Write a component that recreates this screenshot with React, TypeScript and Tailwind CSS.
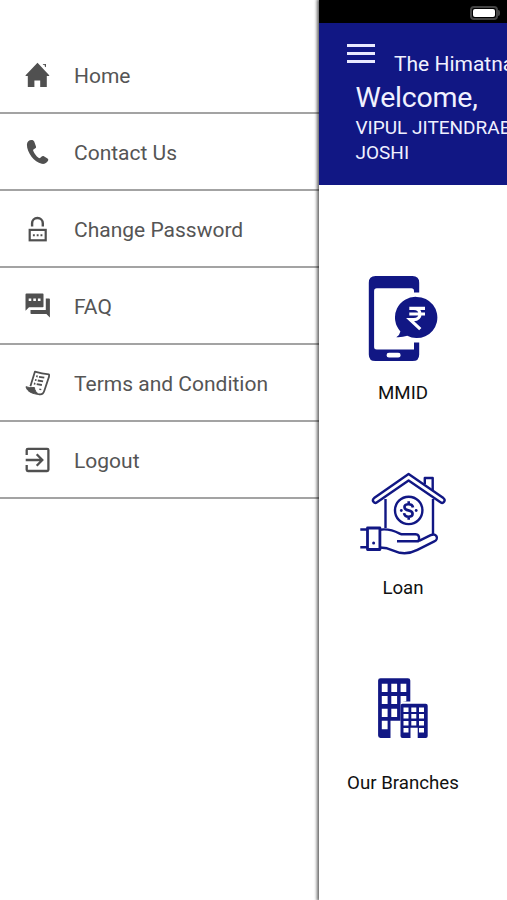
import type { ReactNode } from 'react';

const NAVY = '#111784';

const HomeIcon = () => (
  <svg width="26" height="27" viewBox="24 62 26 27" fill="#505050">
    <path d="M37.500 62.800 25.600 75.200v.8h2.200v10.900h6.600v-6.400h5.800v6.400h6.600V76h2.400v-.8z" />
    <path d="M42.900 64.200 46 64v3.300l-1.200-.9c.3-.8 0-1.300-1.900-1.300z" />
  </svg>
);

const PhoneIcon = () => (
  <svg width="26" height="27" viewBox="24 139 26 27" fill="#505050">
    <path d="M31.500 140c-2.500 0-4.600 1.900-4.600 4.700 0 8 7.500 17.400 14.800 19.100 2.600.5 5.100-.8 6.300-3 .5-1 .3-1.800-.5-2.300l-3.600-2.300c-.8-.5-1.600-.4-2.200.2l-1.300 1.300c-.6.600-1.200.6-1.900.1-2.200-1.600-4-4.200-5.200-6.900-.3-.8-.2-1.300.5-1.700l1.500-.9c.8-.5.9-1.200.6-2.100l-1.700-4.600c-.4-1.100-1.300-1.600-2.700-1.600z" />
  </svg>
);

const LockIcon = () => (
  <svg width="26" height="27" viewBox="24 216 26 27" fill="none" stroke="#505050">
    <path d="M32.100 226.500v-3.200c0-3 2.200-5.300 5.300-5.300s5.400 2.300 5.400 5.300v3.200" strokeWidth="2.400" />
    <rect x="29.700" y="229.900" width="16" height="10.400" strokeWidth="2.200" />
    <path d="M32.900 235.200h1.900M36.700 235.200h1.900M40.500 235.200h1.900" strokeWidth="2" />
  </svg>
);

const FaqIcon = () => (
  <svg width="26" height="27" viewBox="24 293 26 27">
    <path d="M26.500 293.400h16.200q.8 0 .8.800v12.300q0 .8-.8.800H29l-3.500 3.500v-16.400q0-1 1-1z" fill="#505050" />
    <path d="M45.800 298.500h3.300q.8 0 .8.800v18.200l-3.500-3.500H31.300q-.8 0-.8-.8v-3.100h15.300z" fill="#505050" />
    <path d="M28.700 299.800h2.600M33.300 299.800h2.600M37.900 299.800h2.600" stroke="#fff" strokeWidth="2.600" />
  </svg>
);

const TermsIcon = () => (
  <svg width="26" height="27" viewBox="24 370 26 27" fill="none" stroke="#505050" strokeLinejoin="round">
    <path d="M30.400 386.300 34.900 371.700Q42 374 48.900 374.300q.6 1.700-.5 4.200L44.400 390.500c-1 3.200-3.100 4.400-5.700 3.600" strokeWidth="1.800" />
    <path d="M26 386.700q3.300 1.500 8.400.8c.3 2.900 1.900 5.500 4.800 7.000-6.100-.6-12.200-2.500-13.200-7.800z" fill="#505050" strokeWidth="1" />
    <path d="m36.200 376.200 1.500.3m1.300.3 5.300.9M35 379.900l1.500.3m1.300.3 5.300.9M33.900 383.500l1.500.3m1.300.3 5.200.9" strokeWidth="1.800" />
    <path d="m39.300 389.200 2 .5" strokeWidth="1.200" />
  </svg>
);

const LogoutIcon = () => (
  <svg width="26" height="27" viewBox="24 447 26 27" fill="none" stroke="#505050" strokeWidth="2.300">
    <path d="M26.700 455v-5q0-1.200 1.200-1.200h19.200q1.300 0 1.300 1.200v19.700q0 1.300-1.300 1.300H27.900q-1.200 0-1.200-1.300V465" />
    <path d="M25.700 460H42M36.700 454.300l5.600 5.700-5.600 5.700" />
  </svg>
);

const MobileRupeeIcon = () => (
  <svg width="70" height="88" viewBox="368 275 70 88">
    <path
      fillRule="evenodd"
      fill={NAVY}
      d="M375.500 276h37q6.700 0 6.700 6.700v9.800H414v-1.600q0-2.700-2.700-2.700h-34.500q-2.700 0-2.700 2.700v56q0 2.500 2.700 2.500H414v-7h5.200v12q0 6.700-6.700 6.700h-37q-6.700 0-6.700-6.700v-71.700q0-6.700 6.700-6.700zM389 352.700h9.200a2.400 2.400 0 0 1 0 4.900H389a2.400 2.400 0 0 1 0-4.900z"
    />
    <path fill={NAVY} d="M416.800 296.900a20.600 20.600 0 1 1-9.500 38.900q-5.400 1.800-11.000 1.400 3.300-1.800 4.100-5.800a20.600 20.600 0 0 1 16.400-34.500z" />
    <path d="M409.300 308.300H425M409.300 314H425M409.300 308.300h4.500c8.300 0 8.300 11.300 0 11.300h-3.700l10.200 9.600" fill="none" stroke="#fff" strokeWidth="3.200" />
  </svg>
);

const LoanIcon = () => (
  <svg width="88" height="84" viewBox="359 472 88 84" fill="none" stroke={NAVY} strokeWidth="2.400" strokeLinejoin="round">
    <path d="m408.600 474-34.500 24.100c-2.800 2.300.2 6.100 2.900 4.200l31.600-21.900 31.900 21.900c2.800 1.900 5.700-2 2.900-4.200z" />
    <path d="M424.800 484v-6h7.900v12.200M385.500 499v29M433 499v36" />
    <circle cx="408.700" cy="510.400" r="13.700" />
    <path d="M413 507.500c-.3-2.200-2-3.200-4.300-3.200-5.600 0-5.700 5.100-.3 6.100 5.800 1.100 5.300 6.300.2 6.300-2.600 0-4.300-1.300-4.500-3.500M408.700 501.300v3M408.700 516.700v3" strokeWidth="2.600" />
    <circle cx="401.300" cy="510.500" r="1.400" fill={NAVY} stroke="none" />
    <circle cx="416.200" cy="510.500" r="1.400" fill={NAVY} stroke="none" />
    <path d="M360.300 529.500h7M360.300 547.300h7" />
    <path d="M367.500 528h12.400v21.500h-12.400z" strokeWidth="2.800" />
    <circle cx="373.600" cy="543" r="1.500" fill={NAVY} stroke="none" />
    <path d="M380 529.700c8.200-1.200 13.200.5 19.700 3.900 1.500.8 3 .7 5 .7h10.600c4 0 4.600 3.800 3 7H397" />
    <path d="M419 540.800 430.700 535.200c5.900-2.700 8.500 3.800 3.600 6.200l-16.900 8.500c-6.300 3.200-11.200 4.200-17.700 2.900L387 548.300l-7-.8" />
  </svg>
);

const BranchesIcon = () => (
  <svg width="52" height="62" viewBox="377.500 678 52 62">
    <path fill={NAVY} d="M381 678.200h27.400q2.400 0 2.400 2.400v21h-6.100q-3.700 0-3.700 3.700v15.400h-10v17.300H381q-2.400 0-2.400-2.400v-55q0-2.400 2.400-2.400z" />
    <path
      fill="#fff"
      d="M382.300 683.700h5.800v8.300h-5.800zm9.500 0h5.800v8.300h-5.800zm9.300 0h5.700v8.300h-5.700zM382.300 696h5.800v8h-5.800zm9.500 0h5.800v8h-5.800zm9.300 0h5.700v5.200l-3.700.8-2 2zM382.300 708.700h5.800v8.300h-5.800zm9.500 0h5.800v8.300h-5.800zM382.300 720.700h5.800v8.500h-5.800z"
    />
    <path fill={NAVY} d="M403 703.700h23.200q2 0 2 2v30.300q0 2-2 2h-8v-10.300H411V738h-8q-2 0-2-2v-30.300q0-2 2-2z" />
    <path
      fill="#fff"
      d="M404 707.400h5v4.500h-5zm7.800 0h5v4.500h-5zm7.700 0h5v4.500h-5zM404 714.100h5v4.500h-5zm7.800 0h5v4.500h-5zm7.700 0h5v4.500h-5zM404 720.900h5v4.500h-5zm7.800 0h5v4.500h-5zm7.700 0h5v4.500h-5zM404 728h5v4.500h-5zM419.500 728h5v4.500h-5z"
    />
  </svg>
);

const menu: { label: string; icon: ReactNode }[] = [
  { label: 'Home', icon: <HomeIcon /> },
  { label: 'Contact Us', icon: <PhoneIcon /> },
  { label: 'Change Password', icon: <LockIcon /> },
  { label: 'FAQ', icon: <FaqIcon /> },
  { label: 'Terms and Condition', icon: <TermsIcon /> },
  { label: 'Logout', icon: <LogoutIcon /> },
];

const services: { label: string; icon: ReactNode }[] = [
  { label: 'MMID', icon: <MobileRupeeIcon /> },
  { label: 'Loan', icon: <LoanIcon /> },
  { label: 'Our Branches', icon: <BranchesIcon /> },
];

export default function App() {
  return (
    <div className="flex h-[900px] w-[507px] overflow-hidden bg-white font-['Roboto',sans-serif]">
      <nav className="w-[319px] shrink-0 pt-[37px]">
        <ul>
          {menu.map((item) => (
            <li key={item.label} className="flex h-[77px] items-center gap-6 border-b-2 border-[#a3a3a3] pt-px pl-6 text-[21px] text-[#555]">
              {item.icon}
              <span className="pt-1">{item.label}</span>
            </li>
          ))}
        </ul>
      </nav>

      <main className="relative w-[188px] shrink-0 bg-white shadow-[-1px_0_3px_1px_rgba(0,0,0,0.6)]">
        <div className="flex h-[23px] items-center justify-end bg-black pt-[3px] pr-[7px]">
          <div className="h-[14px] w-[28px] rounded-[4px] border-2 border-[#444] p-px">
            <div className="h-full rounded-[2px] bg-white" />
          </div>
          <div className="h-1.5 w-0.5 rounded-r bg-[#444]" />
        </div>
        <header className="h-[162px] overflow-hidden bg-[#111784] text-[#f0f1ff]">
          <div className="flex h-[57px] gap-[19px] pl-7">
            <div className="flex shrink-0 flex-col gap-[5px] pt-[20.500px]">
              <span className="h-[3px] w-[28px] bg-[#e9eaff]" />
              <span className="h-[3px] w-[28px] bg-[#e9eaff]" />
              <span className="h-[3px] w-[28px] bg-[#e9eaff]" />
            </div>
            <h1 className="pt-[26px] text-[21px] leading-[30px] whitespace-nowrap">The Himatna</h1>
          </div>
          <div className="pl-[36.500px]">
            <p className="text-[28.500px] leading-[35px] tracking-[-0.200px]">Welcome,</p>
            <p className="text-[19px] leading-[25px] whitespace-nowrap">
              VIPUL JITENDRAB
              <br />
              JOSHI
            </p>
          </div>
        </header>
        <section className="w-[168px] pt-[35px]">
          {services.map((s) => (
            <div key={s.label} className="flex h-[195px] flex-col items-center">
              <div className="flex h-[158px] items-center pt-[40px]">{s.icon}</div>
              <span className="text-[18.700px] leading-[30px] whitespace-nowrap text-[#111]">{s.label}</span>
            </div>
          ))}
        </section>
      </main>
    </div>
  );
}
